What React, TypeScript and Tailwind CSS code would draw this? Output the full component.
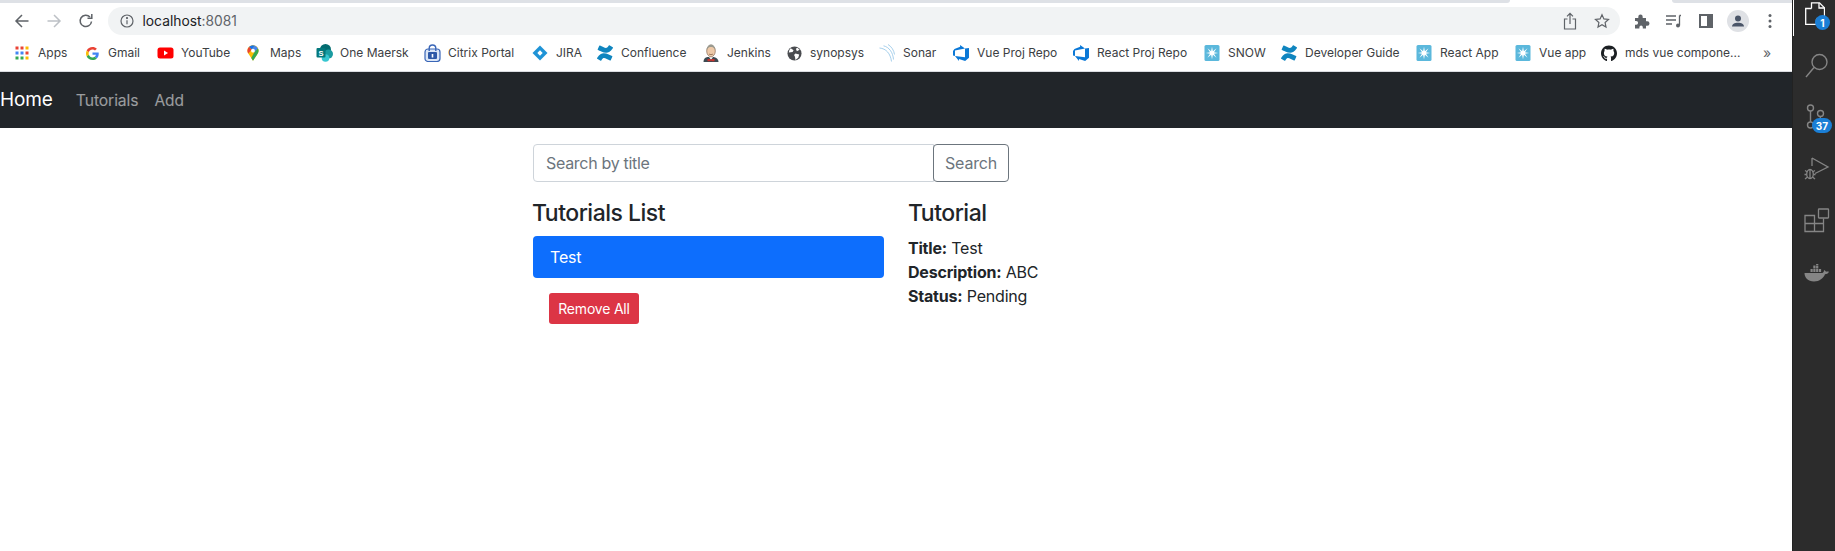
import React from "react";
import { FaGithub } from "react-icons/fa";
import { SiConfluence } from "react-icons/si";

const Apps = () => (
  <svg width="16" height="16" viewBox="0 0 16 16">
    {["#ea4335", "#ea4335", "#fbbc04", "#4285f4", "#4285f4", "#ea4335", "#34a853", "#34a853", "#fbbc04"].map((c, i) => (
      <rect key={i} x={1.5 + (i % 3) * 5} y={1.5 + Math.floor(i / 3) * 5} width="3" height="3" fill={c} />
    ))}
  </svg>
);
const Google = () => (
  <svg width="13" height="13" viewBox="0 0 48 48">
    <path fill="#EA4335" d="M24 9.5c3.5 0 6.7 1.2 9.2 3.6l6.9-6.9C35.900 2.400 30.500 0 24 0 14.600 0 6.500 5.400 2.600 13.200l8 6.200C12.500 13.700 17.800 9.500 24 9.500z" />
    <path fill="#4285F4" d="M47 24.500c0-1.600-.1-3.100-.4-4.500H24v9h12.900c-.6 3-2.200 5.500-4.700 7.200l7.700 6c4.500-4.200 7.100-10.300 7.100-17.700z" />
    <path fill="#FBBC05" d="M10.600 28.600c-.5-1.400-.8-3-.8-4.600s.3-3.200.8-4.600l-8-6.200C.9 16.500 0 20.100 0 24s.9 7.500 2.600 10.800l8-6.200z" />
    <path fill="#34A853" d="M24 48c6.500 0 11.900-2.100 15.900-5.800l-7.700-6c-2.200 1.400-4.900 2.300-8.200 2.300-6.200 0-11.500-4.200-13.400-9.900l-8 6.200C6.500 42.600 14.600 48 24 48z" />
  </svg>
);
const YouTube = () => (
  <svg width="17" height="16" viewBox="0 0 17 16" className="shrink-0">
    <rect x="0.500" y="2.500" width="16" height="11" rx="2.500" fill="#f00" />
    <path d="M7 5.500v5l4-2.500z" fill="#fff" />
  </svg>
);
const Maps = () => (
  <svg width="12" height="18" viewBox="0 0 14 18" className="-ml-[3px]">
    <path d="M7 0C3.300 0 .5 2.900.5 6.300c0 1.300.4 2.400 1 3.300L7 18c1.700-3 4-5.300 5.500-8.400.6-1 1-2.100 1-3.300C13.500 2.900 10.700 0 7 0z" fill="#fbbc04" />
    <path d="M2.300 1.900A6.400 6.400 0 0 1 9.500.5L5.500 4.800z" fill="#1a73e8" />
    <path d="M9.500.5a6.500 6.500 0 0 1 3.300 3.300L8.600 8 5.500 4.800z" fill="#4285f4" />
    <path d="M2.300 1.900A6.300 6.300 0 0 0 .5 6.300c0 1.300.4 2.400 1 3.300l4-4.800z" fill="#ea4335" />
    <path d="M12.800 3.800c.5 .8.700 1.600.7 2.500 0 1.300-.4 2.300-1 3.300-.5 1-1.500 2.200-2.300 3.400L7 18 5 14.800 8.600 8z" fill="#34a853" />
    <circle cx="7" cy="6.300" r="2.200" fill="#fff" />
  </svg>
);
const SharePoint = () => (
  <svg width="17" height="18" viewBox="0 0 17 18" className="shrink-0">
    <circle cx="9.500" cy="5.500" r="5.500" fill="#036c70" />
    <circle cx="12.500" cy="10" r="4.500" fill="#1a9ba1" />
    <circle cx="9.500" cy="14" r="3.800" fill="#37c6d0" />
    <rect x="0.500" y="4" width="9" height="9.500" rx="1" fill="#03787c" />
    <text x="5" y="11.500" fontSize="7.500" fill="#fff" textAnchor="middle" fontFamily="Liberation Sans, sans-serif" fontWeight="700">S</text>
  </svg>
);
const Citrix = () => (
  <svg width="17" height="18" viewBox="0 0 17 18" className="shrink-0">
    <rect x="1" y="5" width="15" height="12.500" rx="3" fill="#dbe6f6" stroke="#3a66b7" strokeWidth="1.200" />
    <path d="M5.200 7V4.300a3.300 3.300 0 0 1 6.600 0V7" fill="none" stroke="#3a66b7" strokeWidth="1.400" />
    <rect x="4" y="8" width="9" height="7" rx="1" fill="#2f5aa8" />
    <rect x="7.700" y="10" width="1.600" height="3.500" fill="#fff" />
  </svg>
);
const Jira = () => (
  <svg width="16" height="16" viewBox="0 0 16 16">
    <path d="M8 .5 15.500 8 8 15.500.5 8z" fill="#1f93d6" />
    <path d="M8 5.300 10.700 8 8 10.700 5.300 8z" fill="#fff" />
  </svg>
);
const Jenkins = () => (
  <svg width="16" height="18" viewBox="0 0 16 18">
    <path d="M.5 18c0-3 1.500-4.500 4-5h6c2.500.5 5 2 5 5z" fill="#3d4a52" />
    <path d="M6 13h4l-2 3z" fill="#f0f0f0" />
    <ellipse cx="8" cy="7" rx="4.300" ry="5.800" fill="#eec9a8" stroke="#8a6a54" strokeWidth="0.700" />
    <path d="M3.700 6c0-3.500 2.300-5.500 4.300-5.500S12.300 2.500 12.300 6C11 3.500 9.500 3 8 3S5 3.500 3.700 6z" fill="#9a9a90" />
    <path d="M4.500 15h2.700L8 15.800l.8-.8h2.700v2.300H8.800L8 16.500l-.8.8H4.500z" fill="#c8322c" />
    <path d="M6 10c1 .8 3 .8 4 0" fill="none" stroke="#7a5a44" strokeWidth="0.700" />
  </svg>
);
const Globe = () => (
  <svg width="15" height="15" viewBox="0 0 16 16">
    <circle cx="8" cy="8" r="7.500" fill="#4a4c50" />
    <path d="M4 2.500 7 4.500 6 6.500 2 7C2.200 5 2.800 3.500 4 2.500zM9 8l4 1-1 3.500-3 2.300L8.500 11.500 7.500 9.500zM11 1.800 13.500 4 10.500 5.500 9.500 3z" fill="#fff" />
  </svg>
);
const Sonar = () => (
  <svg width="16" height="18" viewBox="0 0 16 18" fill="none" stroke="#8fc3e6" strokeWidth="0.800">
    <path d="M.5 4C7 4.500 11.500 9.500 12.500 17.500" />
    <path d="M4.500 1.800C10 3 14 8.500 14.500 15.500" />
    <path d="M9 .5C12.500 2.500 15 6.500 15.500 10.500" />
  </svg>
);
const Devops = () => (
  <svg width="16" height="16" viewBox="0 0 24 24" fill="#0a78d7">
    <path d="M0 8.877 2.247 5.910l8.405-3.416V.022l7.370 5.393L2.966 8.338v8.225L0 15.707zm24-4.450v14.651l-5.753 4.900-9.303-3.057v3.056l-5.978-7.416 15.057 1.798V5.415z" />
  </svg>
);
const MaerskStar = () => (
  <svg width="16" height="18" viewBox="0 0 16 18">
    <rect x="0.500" y="1" width="15" height="16" rx="1.500" fill="#5bb8dc" />
    <path
      d="M8 2.800 8.900 7.300 12.500 4.300 10 8.200 14.200 9 10 9.800 12.500 13.700 8.900 10.700 8 15.200 7.100 10.700 3.500 13.700 6 9.800 1.800 9 6 8.200 3.500 4.300 7.100 7.300z"
      fill="#fff"
    />
  </svg>
);
const Conf = () => <SiConfluence size={16} color="#0f85bf" />;
const Gh = () => <FaGithub size={17} color="#1b1f23" />;

const bookmarks: [React.ReactNode, string, string][] = [
  [<Apps />, "Apps", "w-[70px]"],
  [<Google />, "Gmail", "w-[73px]"],
  [<YouTube />, "YouTube", "w-[89px]"],
  [<Maps />, "Maps", "w-[70px]"],
  [<SharePoint />, "One Maersk", "w-[108px]"],
  [<Citrix />, "Citrix Portal", "w-[108px]"],
  [<Jira />, "JIRA", "w-[65px]"],
  [<Conf />, "Confluence", "w-[106px]"],
  [<Jenkins />, "Jenkins", "w-[83px]"],
  [<Globe />, "synopsys", "w-[93px]"],
  [<Sonar />, "Sonar", "w-[74px]"],
  [<Devops />, "Vue Proj Repo", "w-[120px]"],
  [<Devops />, "React Proj Repo", "w-[131px]"],
  [<MaerskStar />, "SNOW", "w-[77px]"],
  [<Conf />, "Developer Guide", "w-[135px]"],
  [<MaerskStar />, "React App", "w-[99px]"],
  [<MaerskStar />, "Vue app", "w-[86px]"],
  [<Gh />, "mds vue compone...", "w-[162px]"],
];

const ToolIcon = ({ children }: { children: React.ReactNode }) => (
  <div className="w-[32px] h-[28px] flex items-center justify-center shrink-0">{children}</div>
);

const stroke = "#5f6368";

const SideItem = ({ children, badge }: { children: React.ReactNode; badge?: string }) => (
  <div className="relative h-[52px] flex items-center justify-center pl-[6px]">
    {children}
    {badge && (
      <span className="absolute left-[19px] top-[27px] flex items-center justify-center w-[20px] h-[15px] rounded-full bg-[#1b7fd6] text-white font-bold text-[10px] leading-none">
        {badge}
      </span>
    )}
  </div>
);

export default function App() {
  return (
    <div className="flex h-[551px] w-full overflow-hidden bg-white font-['Inter',sans-serif] text-[#212529]">
      <div className="flex-1 min-w-0 flex flex-col">
        <div className="h-[3px] flex shrink-0">
          <div className="w-[1510px] bg-[#dee1e6] rounded-br-[6px]" />
          <div className="w-[162px] bg-white" />
          <div className="flex-1 bg-[#dee1e6] rounded-bl-[6px]" />
        </div>
        <div className="flex items-center pt-[4px] pl-[6px] shrink-0">
          <ToolIcon>
            <svg width="16" height="16" viewBox="0 0 16 16" fill="none" stroke={stroke} strokeWidth="1.500">
              <path d="M14.500 8H2M8 2 2 8l6 6" />
            </svg>
          </ToolIcon>
          <ToolIcon>
            <svg width="16" height="16" viewBox="0 0 16 16" fill="none" stroke="#bdc1c6" strokeWidth="1.500">
              <path d="M1.500 8H14M8 2l6 6-6 6" />
            </svg>
          </ToolIcon>
          <ToolIcon>
            <svg width="16" height="16" viewBox="0 0 16 16" fill="none" stroke={stroke} strokeWidth="1.500">
              <path d="M13.500 8.500A5.700 5.700 0 1 1 12 4" />
              <path d="M13.800 1v4.300H9.500" />
            </svg>
          </ToolIcon>
          <div className="ml-[6px] w-[1512px] h-[28px] rounded-full bg-[#f1f3f4] flex items-center pl-[12px] pr-[2px] shrink-0">
            <svg width="14" height="14" viewBox="0 0 14 14" fill="none" stroke={stroke} strokeWidth="1.200" className="shrink-0">
              <circle cx="7" cy="7" r="6" />
              <path d="M7 6.200V10.200" />
              <circle cx="7" cy="4.100" r="0.500" fill={stroke} />
            </svg>
            <span className="ml-[8.500px] text-[13.800px] text-[#202124]">
              localhost<span className="text-[#5f6368]">:8081</span>
            </span>
            <div className="ml-auto flex">
              <ToolIcon>
                <svg width="14" height="18" viewBox="0 0 14 18" fill="none" stroke={stroke} strokeWidth="1.200">
                  <path d="M4.500 7H1.500v10h11V7H9.500M7 12V1.500M4 4.300 7 1.300l3 3" />
                </svg>
              </ToolIcon>
              <ToolIcon>
                <svg width="16" height="16" viewBox="0 0 16 16" fill="none" stroke={stroke} strokeWidth="1.200">
                  <path d="M8 1.700 9.900 5.900l4.600.5-3.400 3.100.9 4.600L8 11.800l-4 2.300.9-4.600L1.500 6.400l4.600-.5z" />
                </svg>
              </ToolIcon>
            </div>
          </div>
          <div className="ml-[6px] flex">
            <ToolIcon>
              <svg width="16" height="16" viewBox="0 0 16 16" fill={stroke}>
                <path d="M1 5h3.300V3.700a2.200 2.200 0 0 1 4.400 0V5H12v3.300h1.300a2.200 2.200 0 0 1 0 4.400H12V15.500H8.800v-1.300a1.700 1.700 0 0 0-3.400 0v1.300H1v-3.800h1.200a1.900 1.900 0 0 0 0-3.800H1z" />
              </svg>
            </ToolIcon>
            <ToolIcon>
              <svg width="16" height="16" viewBox="0 0 16 16" fill="none" stroke={stroke} strokeWidth="1.300">
                <path d="M0 3h10M0 7h10M0 11h6" />
                <path d="M13.500 2.500H15M13.500 2.500v10" />
                <circle cx="12" cy="12.500" r="2" fill={stroke} stroke="none" />
              </svg>
            </ToolIcon>
            <ToolIcon>
              <svg width="14" height="14" viewBox="0 0 14 14">
                <path fillRule="evenodd" d="M0 0h14v14H0zM2 2v10h6V2z" fill={stroke} />
              </svg>
            </ToolIcon>
            <ToolIcon>
              <svg width="22" height="22" viewBox="0 0 22 22">
                <circle cx="11" cy="11" r="11" fill="#dfe1e5" />
                <circle cx="11" cy="8.500" r="3" fill="#4a5568" />
                <path d="M5 16.500c0-2.500 2.500-3.800 6-3.800s6 1.300 6 3.800z" fill="#4a5568" />
              </svg>
            </ToolIcon>
            <ToolIcon>
              <svg width="4" height="16" viewBox="0 0 4 16" fill={stroke}>
                <circle cx="2" cy="2.500" r="1.500" />
                <circle cx="2" cy="8" r="1.500" />
                <circle cx="2" cy="13.500" r="1.500" />
              </svg>
            </ToolIcon>
          </div>
        </div>
        <div className="h-[37px] shrink-0 border-b border-[#dadce0] flex items-center pl-[14px] text-[12px] text-[#3c4043]">
          {bookmarks.map(([icon, label, w]) => (
            <div key={label} className={`flex items-center shrink-0 ${w}`}>
              <span className="w-[16px] h-[18px] flex items-center justify-center shrink-0">{icon}</span>
              <span className="ml-[8px] whitespace-nowrap">{label}</span>
            </div>
          ))}
          <span className="text-[14px] text-[#5f6368] leading-none">»</span>
        </div>
        <nav className="h-[56px] shrink-0 bg-[#212529] flex items-center tracking-[-0.1px] pt-px">
          <a className="text-[19px] text-white">Home</a>
          <a className="ml-[23px] text-[15.700px] text-white/55">Tutorials</a>
          <a className="ml-[16px] text-[15.500px] text-white/55">Add</a>
        </nav>
        <main className="pl-[533px] pt-[16px] tracking-[-0.2px]">
          <div className="flex w-[476px] h-[38px]">
            <input
              placeholder="Search by title"
              className="flex-1 min-w-0 border border-[#ced4da] rounded-l-[4px] px-[12px] text-[16px] tracking-[-0.3px] outline-none placeholder:text-[#6c757d]"
            />
            <button className="w-[76px] border border-[#6c757d] rounded-[4px] text-[16px] text-[#6c757d] -ml-px">Search</button>
          </div>
          <div className="flex mt-[16px] pt-px">
            <div className="w-[351px]">
              <h4 className="text-[23px] leading-[29px] font-medium mb-[8px] -ml-px tracking-[-0.5px]">Tutorials List</h4>
              <div className="h-[42px] rounded-[4px] bg-[#0d6efd] text-white text-[16px] flex items-center px-[17px]">Test</div>
              <button className="mt-[15px] ml-[16px] h-[31px] w-[90px] rounded-[3px] bg-[#dc3545] text-white text-[14px]">Remove All</button>
            </div>
            <div className="ml-[24px]">
              <h4 className="text-[23px] leading-[29px] font-medium mb-[8px] tracking-[-0.5px]">Tutorial</h4>
              <div className="text-[16px] leading-[24px]"><strong className="font-bold">Title:</strong> Test</div>
              <div className="text-[16px] leading-[24px]"><strong className="font-bold">Description:</strong> ABC</div>
              <div className="text-[16px] leading-[24px]"><strong className="font-bold">Status:</strong> Pending</div>
            </div>
          </div>
        </main>
      </div>
      <aside className="w-[43px] shrink-0 bg-[#2c2c2c] border-l border-[#222] flex flex-col">
        <div className="relative h-[36px] mb-[3px] border-l border-white">
          <svg width="20" height="23" viewBox="0 0 20 23" fill="none" stroke="#fff" strokeWidth="1.300" className="ml-[11px] mt-[2px]">
            <path d="M6.500 6.500V.8h8l5 5v11h-8" />
            <path d="M14 1v5h5.500" />
            <path d="M6.500 6.500H.7v15.800h10.800V17" />
          </svg>
          <span className="absolute left-[21px] top-[15px] flex items-center justify-center w-[15px] h-[15px] rounded-full bg-[#1b7fd6] text-white font-bold text-[10px] leading-none">
            1
          </span>
        </div>
        <SideItem>
          <svg width="24" height="26" viewBox="0 0 24 26" fill="none" stroke="#858585" strokeWidth="1.400">
            <circle cx="14.500" cy="10" r="7.500" />
            <path d="M9 15.500 1 25" />
          </svg>
        </SideItem>
        <SideItem badge="37">
          <svg width="24" height="26" viewBox="0 0 24 26" fill="none" stroke="#858585" strokeWidth="1.400">
            <circle cx="5.500" cy="4" r="3" />
            <circle cx="5.500" cy="21" r="3" />
            <circle cx="15.500" cy="9.500" r="3" />
            <path d="M5.500 7v11M8.500 21c4 0 7-4 7-8.500" />
          </svg>
        </SideItem>
        <SideItem>
          <svg width="26" height="26" viewBox="0 0 26 26" fill="none" stroke="#858585" strokeWidth="1.300">
            <path d="M8 2 24 11 11 17.500M8 2V10" />
            <ellipse cx="6" cy="18" rx="3.300" ry="4.500" />
            <path d="M6 13.500V22M1 14.500l2.500 1.500M11 14.500l-2.500 1.500M.5 18.500h2M9.500 18.500h2M1 23l2.500-2M11 23l-2.500-2" />
          </svg>
        </SideItem>
        <SideItem>
          <svg width="26" height="26" viewBox="0 0 26 26" fill="none" stroke="#858585" strokeWidth="1.300">
            <rect x="14.500" y="1" width="10" height="9" rx="0.500" />
            <path d="M1 7.500h9.500v16H1zM1 15.500h18.500v8h-9M10.500 7.500v8M19.500 15.500v-5" />
          </svg>
        </SideItem>
        <SideItem>
          <svg width="26" height="18" viewBox="0 0 26 18" fill="#858585">
            <path d="M.5 9h17.500c1.500-.2 2-1.500 2-3 1 .5 1.700 1 2 1.700 1-.3 2-.3 3 .1-1 1.800-2.500 2.500-4 2.500C19.500 14.300 15.500 17.500 10 17.500 4 17.500.5 13.500.5 9z" />
            <rect x="6.500" y="5" width="2.200" height="3" />
            <rect x="9.300" y="5" width="2.200" height="3" />
            <rect x="12.100" y="5" width="2.200" height="3" />
            <rect x="14.900" y="5" width="2.200" height="3" />
            <rect x="9.300" y="1.500" width="2.200" height="3" />
            <rect x="12.100" y="1.500" width="2.200" height="3" />
            <rect x="12.100" y="-1.500" width="2.200" height="2.500" />
          </svg>
        </SideItem>
      </aside>
    </div>
  );
}
